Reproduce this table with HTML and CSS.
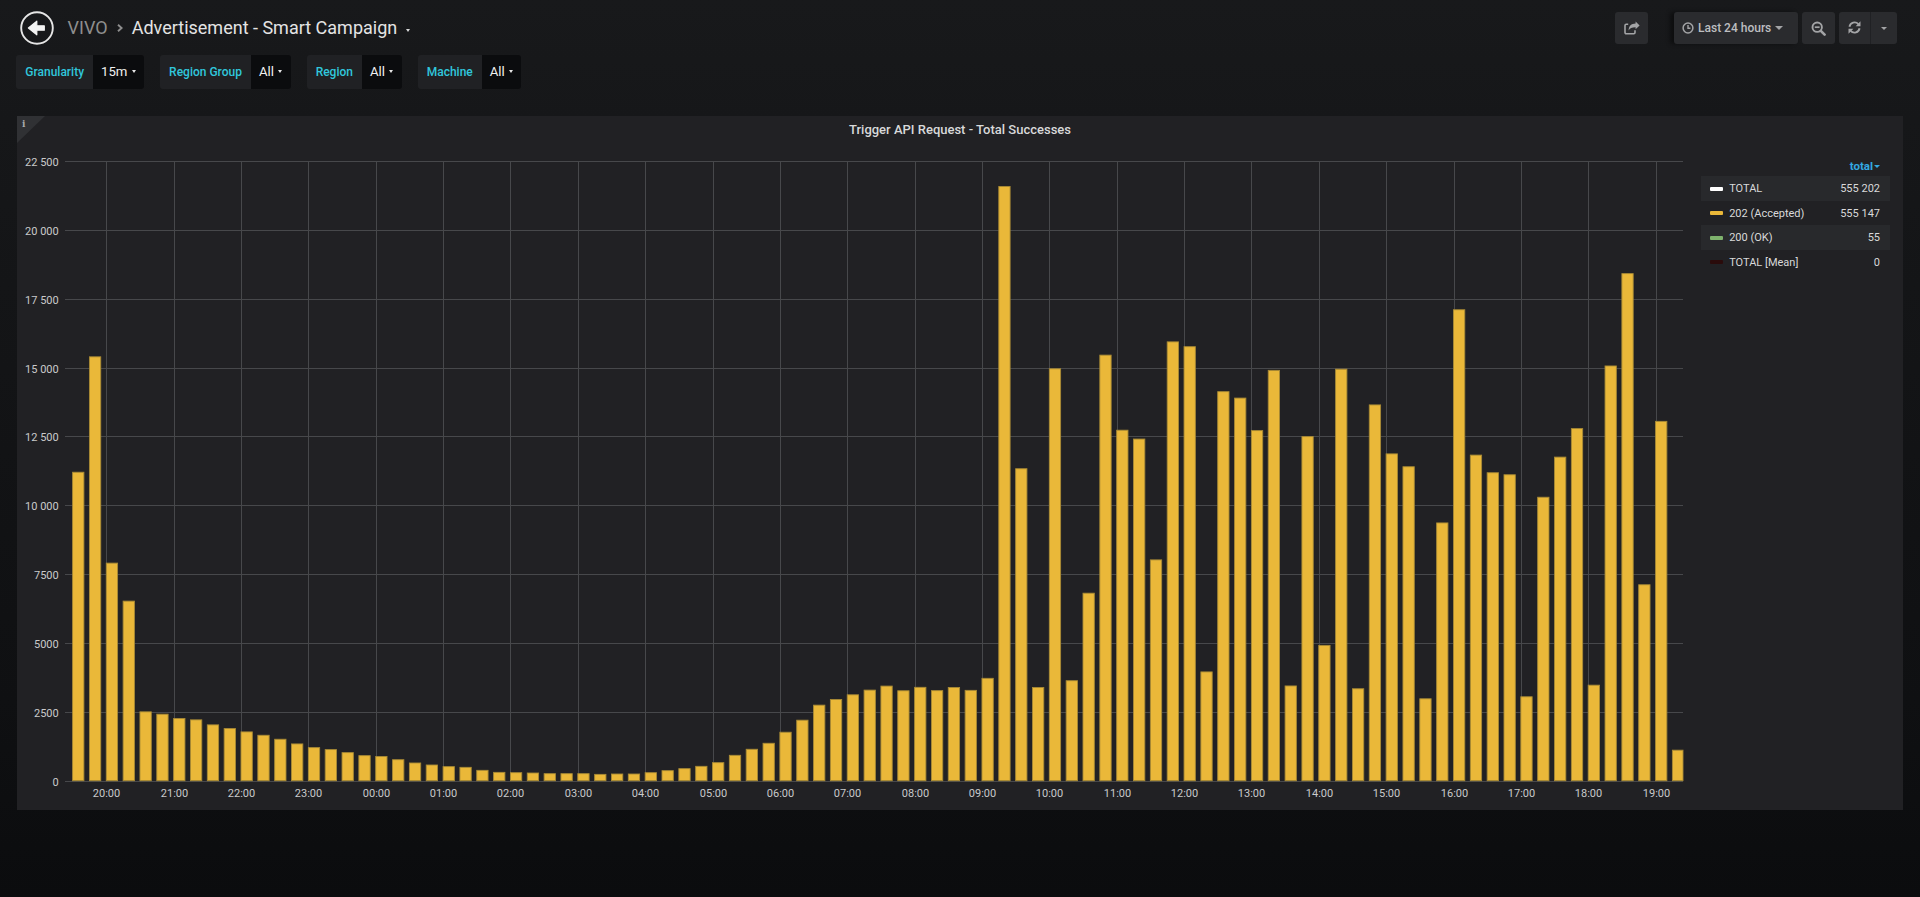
FILE: index.html
```html
<!DOCTYPE html>
<html lang="en">
<head>
<meta charset="utf-8">
<title>VIVO - Advertisement - Smart Campaign</title>
<link rel="stylesheet" href="styles.css">
</head>
<body>
<header class="navbar">
  <div class="nav-left">
    <svg class="back" viewBox="0 0 34 34" aria-hidden="true">
      <circle cx="17" cy="17" r="15.8" fill="none" stroke="#e6e6e6" stroke-width="1.9"/>
      <path d="M8.4 17 L16.8 10.2 L16.8 14.8 L24.3 14.8 L24.3 19.2 L16.8 19.2 L16.8 23.8 Z" fill="#f4f4f4" stroke="#f4f4f4" stroke-width="1.2" stroke-linejoin="round"/>
    </svg>
    <span class="crumb-parent">VIVO</span>
    <svg class="chev" viewBox="0 0 6 8" aria-hidden="true"><path d="M1 0.8 L4.6 4 L1 7.2" fill="none" stroke="#8e8e8e" stroke-width="1.9"/></svg>
    <span class="crumb-title">Advertisement - Smart Campaign</span>
    <span class="title-caret"></span>
  </div>
  <div class="nav-right">
    <button class="btn btn-share" type="button" aria-label="Share">
      <svg class="icon share-icon" viewBox="0 0 16 14" aria-hidden="true">
        <path d="M11 9.2 V11.6 A1.2 1.2 0 0 1 9.8 12.8 H2.2 A1.2 1.2 0 0 1 1 11.6 V4.4 A1.2 1.2 0 0 1 2.2 3.2 H4.2" fill="none" stroke="currentColor" stroke-width="1.6"/>
        <path d="M15.6 4.4 L11.6 0.6 V2.6 C7.2 2.8 4.8 5 4.6 9.6 C5.8 7.2 7.8 6.2 11.6 6.2 V8.2 Z" fill="currentColor"/>
      </svg>
    </button>
    <button class="btn btn-time" type="button">
      <svg class="icon clock-icon" viewBox="0 0 12 12" aria-hidden="true">
        <circle cx="6" cy="6" r="4.9" fill="none" stroke="currentColor" stroke-width="1.5"/>
        <path d="M6 2.9 V6.3 H8.4" fill="none" stroke="currentColor" stroke-width="1.4"/>
      </svg>
      <span class="time-text">Last 24 hours</span>
      <span class="caret caret-time"></span>
    </button>
    <button class="btn btn-zoom" type="button" aria-label="Zoom out">
      <svg class="icon zoom-icon" viewBox="0 0 15 15" aria-hidden="true">
        <circle cx="6.2" cy="6.2" r="4.7" fill="none" stroke="currentColor" stroke-width="1.9"/>
        <path d="M3.8 6.2 H8.6" stroke="currentColor" stroke-width="1.7"/>
        <path d="M9.8 9.8 L13.6 13.6" stroke="currentColor" stroke-width="2.6" stroke-linecap="round"/>
      </svg>
    </button>
    <div class="btn-group">
      <button class="btn btn-refresh" type="button" aria-label="Refresh">
        <svg class="icon refresh-icon" viewBox="0 0 16 16" aria-hidden="true">
          <path d="M2.6 7.2 A5.5 5.5 0 0 1 12.1 4.4" fill="none" stroke="currentColor" stroke-width="2"/>
          <path d="M14.4 1.4 V6.6 H9.2 Z" fill="currentColor"/>
          <path d="M13.4 8.8 A5.5 5.5 0 0 1 3.9 11.6" fill="none" stroke="currentColor" stroke-width="2"/>
          <path d="M1.6 14.6 V9.4 H6.8 Z" fill="currentColor"/>
        </svg>
      </button>
      <button class="btn btn-drop" type="button" aria-label="Refresh options"><span class="caret caret-drop"></span></button>
    </div>
  </div>
</header>

<nav class="vars">
  <div class="var"><span class="var-label">Granularity</span><span class="var-value">15m<span class="caret caret-var"></span></span></div>
  <div class="var"><span class="var-label">Region Group</span><span class="var-value">All<span class="caret caret-var"></span></span></div>
  <div class="var"><span class="var-label">Region</span><span class="var-value">All<span class="caret caret-var"></span></span></div>
  <div class="var"><span class="var-label">Machine</span><span class="var-value">All<span class="caret caret-var"></span></span></div>
</nav>

<section class="panel">
  <div class="info-corner"><span class="info-i">i</span></div>
  <div class="panel-title">Trigger API Request - Total Successes</div>
  <div class="panel-body">
    <svg class="chart" viewBox="0 0 1673 660" width="1673" height="660"></svg>
    <div class="legend">
      <div class="legend-head"><span class="sort">total</span><span class="caret caret-blue"></span></div>
      <div class="legend-row odd"><i class="swatch sw-total"></i><span class="lname">TOTAL</span><span class="lval">555 202</span></div>
      <div class="legend-row"><i class="swatch sw-202"></i><span class="lname">202 (Accepted)</span><span class="lval">555 147</span></div>
      <div class="legend-row odd"><i class="swatch sw-200"></i><span class="lname">200 (OK)</span><span class="lval">55</span></div>
      <div class="legend-row"><i class="swatch sw-mean"></i><span class="lname">TOTAL [Mean]</span><span class="lval">0</span></div>
    </div>
  </div>
</section>
<script src="script.js"></script>
</body>
</html>
```

FILE: styles.css
```css
html, body {
  margin: 0;
  padding: 0;
}
body {
  width: 1920px;
  height: 897px;
  overflow: hidden;
  background: linear-gradient(180deg, #18191b 0px, #161719 120px, #0f1012 700px, #0b0c0e 897px);
  font-family: Roboto, "Liberation Sans", sans-serif;
  color: #d8d9da;
}

/* ---------- top navbar ---------- */
.navbar {
  display: flex;
  justify-content: space-between;
  align-items: center;
  height: 55px;
  padding: 0 23px 0 19.6px;
  box-sizing: border-box;
}
.nav-left {
  display: flex;
  align-items: center;
}
.back {
  width: 34px;
  height: 34px;
  margin-right: 14px;
  margin-top: 0.5px;
}
.crumb-parent {
  font-size: 18px;
  color: #8e8e8e;
}
.chev {
  width: 6px;
  height: 8px;
  margin: 1px 9px 0 9px;
}
.crumb-title {
  font-size: 18px;
  color: #e4e4e4;
}
.title-caret {
  width: 0;
  height: 0;
  margin: 6px 0 0 9px;
  border-top: 3px solid #d8d9da;
  border-left: 2.5px solid transparent;
  border-right: 2.5px solid transparent;
}

.nav-right {
  display: flex;
  align-items: center;
}
.btn {
  height: 32px;
  border: 0;
  padding: 0;
  margin: 0;
  border-radius: 3px;
  background: #2a2b2e;
  color: #a3a4a6;
  display: flex;
  align-items: center;
  justify-content: center;
  font-family: inherit;
}
.icon {
  display: block;
}
.btn-share {
  width: 33px;
  margin-right: 26px;
}
.share-icon {
  width: 16px;
  height: 14px;
}
.btn-time {
  width: 124px;
  justify-content: flex-start;
  padding-left: 8px;
  margin-right: 4px;
  box-shadow: -4px 0 4px rgba(0, 0, 0, 0.45);
}
.clock-icon {
  width: 12px;
  height: 12px;
  margin-right: 4px;
}
.time-text {
  font-size: 12px;
  font-weight: 500;
  color: #bdbec0;
}
.caret {
  display: inline-block;
  width: 0;
  height: 0;
  border-left: 4px solid transparent;
  border-right: 4px solid transparent;
  border-top: 4px solid #a3a4a6;
}
.caret-time {
  margin-left: 4px;
}
.btn-zoom {
  width: 33px;
  margin-right: 4px;
}
.zoom-icon {
  width: 15px;
  height: 15px;
  margin-top: 1px;
}
.btn-group {
  display: flex;
}
.btn-refresh {
  width: 31px;
  border-radius: 3px 0 0 3px;
}
.refresh-icon {
  width: 15px;
  height: 15px;
}
.btn-drop {
  width: 27px;
  border-left: 1px solid #202124;
  border-radius: 0 3px 3px 0;
}
.caret-drop {
  border-left-width: 3.5px;
  border-right-width: 3.5px;
  border-top-width: 3.5px;
  margin-top: 2px;
}

/* ---------- template variables ---------- */
.vars {
  display: flex;
  gap: 16px;
  padding-left: 16.3px;
  height: 34px;
}
.var {
  display: flex;
  height: 33.6px;
  border-radius: 3px;
  overflow: hidden;
}
.var-label {
  display: flex;
  align-items: center;
  padding: 0 9px;
  background: #202124;
  color: #30c7dc;
  font-size: 12px;
  font-weight: 500;
}
.var-value {
  display: flex;
  align-items: center;
  padding: 0 8.5px 0 8px;
  background: #0b0c0e;
  color: #f0f0f0;
  font-size: 13.2px;
}
.caret-var {
  margin-left: 4.2px;
  border-left-width: 2.8px;
  border-right-width: 2.8px;
  border-top-width: 3.4px;
  border-top-color: #e8e8e8;
}

/* ---------- panel ---------- */
.panel {
  position: relative;
  margin: 27.4px 17px 0 17px;
  height: 694px;
  background: #212124;
  box-sizing: border-box;
}
.info-corner {
  position: absolute;
  top: 0;
  left: 0;
  width: 0;
  height: 0;
  border-top: 27px solid #303134;
  border-right: 28px solid transparent;
}
.info-i {
  position: absolute;
  top: -24px;
  left: 5px;
  font-family: "DejaVu Serif", serif;
  font-weight: bold;
  font-size: 9px;
  line-height: 10px;
  color: #a9aaac;
}
.panel-title {
  height: 28px;
  line-height: 28px;
  text-align: center;
  font-size: 13px;
  font-weight: 500;
  color: #d8d9da;
}
.panel-body {
  display: flex;
}
.chart {
  display: block;
  flex: none;
  width: 1673px;
  height: 660px;
}
.chart .grid line {
  stroke: #47484b;
  stroke-width: 1;
  shape-rendering: crispEdges;
}
.chart .ticks text {
  font-family: Roboto, "Liberation Sans", sans-serif;
  font-size: 11px;
  fill: #c9cacb;
}
.chart .bars rect {
  fill: #eab839;
  stroke: #a88a35;
  stroke-width: 0.9;
}

/* ---------- legend ---------- */
.legend {
  flex: none;
  width: 189px;
  margin-left: 11px;
  padding-top: 12px;
  font-size: 11px;
}
.legend-head {
  height: 20px;
  display: flex;
  justify-content: flex-end;
  align-items: center;
  padding-right: 10px;
}
.sort {
  color: #33a9e2;
  font-weight: bold;
  font-size: 11.5px;
}
.caret-blue {
  margin-left: 1px;
  border-left-width: 3px;
  border-right-width: 3px;
  border-top-width: 3.5px;
  border-top-color: #33a9e2;
}
.legend-row {
  height: 24.5px;
  display: flex;
  align-items: center;
  padding: 0 10px 0 9px;
  color: #d8d9da;
}
.legend-row.odd {
  background: #28292c;
}
.swatch {
  display: block;
  width: 12.5px;
  height: 4px;
  border-radius: 1px;
  margin-right: 6.7px;
}
.sw-total { background: #ffffff; }
.sw-202 { background: #eab839; }
.sw-200 { background: #7eb26d; }
.sw-mean { background: #2a0b0b; }
.lval {
  margin-left: auto;
}
```

FILE: script.js
```js
(function () {
  var vals = [11200,15390,7900,6520,2500,2415,2257,2209,2027,1893,
    1772,1650,1505,1335,1201,1129,1019,910,880,762,
    643,570,510,485,376,303,291,279,255,255,
    255,230,243,243,291,364,437,522,655,922,
    1141,1359,1760,2197,2743,2949,3119,3289,3435,3265,
    3390,3270,3382,3280,3717,21574,11327,3382,14956,3630,
    6808,15452,12726,12405,8017,15933,15758,3950,14125,13892,
    12711,14898,3440,12493,4913,14942,3338,13644,11866,11399,
    2974,9359,17099,11822,11181,11108,3047,10292,11749,12784,
    3469,15058,18411,7114,13047,1108];
  var NS = 'http://www.w3.org/2000/svg';
  var svg = document.querySelector('.chart');
  var L = 48.3, R = 1666, T = 17, Z = 636.7;
  var unit = (Z - T) / 22500;

  function el(name, attrs, parent) {
    var e = document.createElementNS(NS, name);
    for (var k in attrs) { e.setAttribute(k, attrs[k]); }
    parent.appendChild(e);
    return e;
  }
  function fmt(v) {
    var s = String(v);
    if (v >= 10000) { return s.slice(0, s.length - 3) + ' ' + s.slice(-3); }
    return s;
  }
  function pad(n) { return (n < 10 ? '0' : '') + n; }

  var grid = el('g', { 'class': 'grid' }, svg);
  var ticks = el('g', { 'class': 'ticks' }, svg);
  var bars = el('g', { 'class': 'bars' }, svg);

  for (var i = 0; i <= 9; i++) {
    var v = i * 2500;
    var y = Math.round(Z - v * unit) + 0.5;
    el('line', { x1: L, x2: R, y1: y, y2: y }, grid);
    var t = el('text', { x: 41.7, y: y + 4, 'text-anchor': 'end' }, ticks);
    t.textContent = fmt(v);
  }
  for (var h = 0; h < 24; h++) {
    var x = Math.round(89.3 + 67.36 * h) + 0.5;
    el('line', { x1: x, x2: x, y1: T, y2: Z }, grid);
    var tx = el('text', { x: x, y: 653, 'text-anchor': 'middle' }, ticks);
    tx.textContent = pad((20 + h) % 24) + ':00';
  }
  for (var k = 0; k < vals.length; k++) {
    var bx = 55.6 + 16.84 * k;
    var w = Math.min(11.3, R - bx);
    var bh = vals[k] * unit;
    el('rect', { x: bx.toFixed(2), y: (Z - bh).toFixed(2), width: w.toFixed(2), height: bh.toFixed(2) }, bars);
  }
})();
```
